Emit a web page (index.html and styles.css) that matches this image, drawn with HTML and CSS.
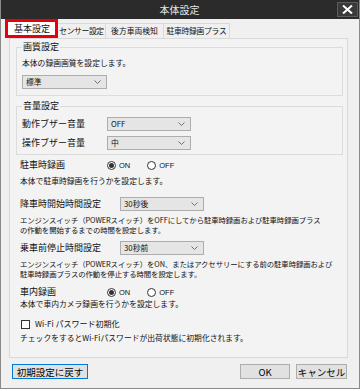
FILE: index.html
```html
<!DOCTYPE html>
<html><head><meta charset="utf-8">
<title>本体設定</title>
<link rel="stylesheet" href="styles.css">
</head><body>
<div class="window">
  <div class="titlebar">
    <span></span>
    <span class="title">本体設定</span>
    <button class="close"><svg width="11" height="9" viewBox="0 0 11 9"><path d="M1 0.5 L10 8.5 M10 0.5 L1 8.5" stroke="#fff" stroke-width="2"/></svg></button>
  </div>

  <div class="tabs">
    <div class="tab active">基本設定</div>
    <div class="tab tab-sensor">センサー設定</div>
    <div class="tab tab-rear">後方車両検知</div>
    <div class="tab tab-plus">駐車時録画プラス</div>
  </div>

  <div class="panel">
    <fieldset class="group group-quality">
      <legend>画質設定</legend>
      <p class="desc">本体の録画画質を設定します。</p>
      <div class="select">標準<svg class="arrow" width="7" height="4" viewBox="0 0 7 4"><polyline points="0.5,0.5 3.5,3.5 6.5,0.5" fill="none" stroke="#707070"/></svg></div>
    </fieldset>

    <fieldset class="group group-volume">
      <legend>音量設定</legend>
      <div class="row">
        <span class="label label-vol">動作ブザー音量</span>
        <div class="select">OFF<svg class="arrow" width="7" height="4" viewBox="0 0 7 4"><polyline points="0.5,0.5 3.5,3.5 6.5,0.5" fill="none" stroke="#707070"/></svg></div>
      </div>
      <div class="row row-gap">
        <span class="label label-vol">操作ブザー音量</span>
        <div class="select">中<svg class="arrow" width="7" height="4" viewBox="0 0 7 4"><polyline points="0.5,0.5 3.5,3.5 6.5,0.5" fill="none" stroke="#707070"/></svg></div>
      </div>
    </fieldset>

    <div class="section">
      <div class="row row-radio sp-parking">
        <span class="label label-radio">駐車時録画</span>
        <span class="radio checked"></span><span class="radio-text">ON</span>
        <span class="radio"></span><span class="radio-text">OFF</span>
      </div>
      <p class="desc sp-parking-desc">本体で駐車時録画を行うかを設定します。</p>

      <div class="row sp-start">
        <span class="label label-time">降車時開始時間設定</span>
        <div class="select">30秒後<svg class="arrow" width="7" height="4" viewBox="0 0 7 4"><polyline points="0.5,0.5 3.5,3.5 6.5,0.5" fill="none" stroke="#707070"/></svg></div>
      </div>
      <p class="desc desc-long sp-start-desc">エンジンスイッチ（POWERスイッチ）をOFFにしてから駐車時録画および駐車時録画プラス<br>の作動を開始するまでの時間を設定します。</p>

      <div class="row sp-stop">
        <span class="label label-time">乗車前停止時間設定</span>
        <div class="select">30秒前<svg class="arrow" width="7" height="4" viewBox="0 0 7 4"><polyline points="0.5,0.5 3.5,3.5 6.5,0.5" fill="none" stroke="#707070"/></svg></div>
      </div>
      <p class="desc desc-long sp-stop-desc">エンジンスイッチ（POWERスイッチ）をON、またはアクセサリーにする前の駐車時録画および<br>駐車時録画プラスの作動を停止する時間を設定します。</p>

      <div class="row row-radio sp-cabin">
        <span class="label label-radio">車内録画</span>
        <span class="radio checked"></span><span class="radio-text">ON</span>
        <span class="radio"></span><span class="radio-text">OFF</span>
      </div>
      <p class="desc sp-cabin-desc">本体で車内カメラ録画を行うかを設定します。</p>

      <div class="row sp-wifi">
        <span class="checkbox"></span><span class="label">Wi-Fi パスワード初期化</span>
      </div>
      <p class="desc sp-wifi-desc">チェックをするとWi-Fiパスワードが出荷状態に初期化されます。</p>
    </div>
  </div>

  <div class="footer">
    <button class="btn btn-default">初期設定に戻す</button>
    <span class="spacer"></span>
    <button class="btn btn-ok">OK</button>
    <button class="btn btn-cancel">キャンセル</button>
  </div>
</div>
</body></html>
```

FILE: styles.css
```css
* {
  box-sizing: border-box;
}
body {
  margin: 0;
  background-color: #fff;
  font-family: "Noto Sans CJK JP", "Noto Sans", sans-serif;
  color: #111;
}
.window {
  width: 360px;
  height: 389px;
  background-color: #f0f0f0;
  border: 1px solid #8a8a8a;
  border-top: none;
  display: flex;
  flex-direction: column;
}
.titlebar {
  height: 19px;
  background-color: #2b2b2b;
  display: grid;
  grid-template-columns: 1fr auto 1fr;
  align-items: center;
  padding-right: 1px;
}
.title {
  color: #e6e6e6;
  font-size: 10px;
  line-height: 19px;
}
.close {
  justify-self: end;
  width: 21px;
  height: 15px;
  padding: 0;
  border: 1px solid #5c5c5c;
  background-color: #3a3a3a;
  display: flex;
  align-items: center;
  justify-content: center;
}

/* tabs */
.tabs {
  height: 19px;
  display: flex;
  align-items: flex-end;
  padding-left: 4px;
}
.tab {
  height: 15px;
  font-size: 7.8px;
  line-height: 14px;
  text-align: center;
  border: 1px solid #d9d9d9;
  border-bottom: none;
  border-left: none;
  background-color: #f0f0f0;
  white-space: nowrap;
}
.tab-sensor {
  width: 48px;
  letter-spacing: -0.4px;
}
.tab-rear {
  width: 58px;
}
.tab-plus {
  width: 66px;
  letter-spacing: -0.3px;
}
.tab.active {
  height: 19px;
  width: 53px;
  padding: 0 0 0 1px;
  line-height: 13px;
  font-size: 9px;
  border: 3px solid #e8000f;
  background-color: #fff;
}

/* panel */
.panel {
  height: 320px;
  margin: 0 11px 0 8px;
  padding: 0 4px 0 6px;
  background-color: #f3f3f3;
  border: 1px solid #d9d9d9;
}
.group {
  margin: 0;
  padding: 4px 5px 6px;
  border: 1px solid #dcdcdc;
  min-width: 0;
}
.group legend {
  padding: 0 1px;
  font-size: 9px;
  line-height: 12px;
}
.group-quality {
  margin-top: 2px;
}
.group-volume {
  margin-top: 4px;
  padding: 5px 5px 4px;
}
.desc {
  margin: 0;
  font-size: 7.8px;
  line-height: 12px;
  white-space: nowrap;
}
.group-quality .select {
  margin-top: 6px;
  width: 85px;
}
.row {
  display: flex;
  align-items: center;
  height: 14px;
}
.row-gap {
  margin-top: 5px;
}
.label {
  font-size: 9px;
  line-height: 12px;
  white-space: nowrap;
}
.label-vol {
  width: 85px;
}
.label-radio {
  width: 87px;
}
.label-time {
  width: 100px;
}
.select {
  width: 84px;
  height: 14px;
  padding-left: 3px;
  font-size: 7.8px;
  line-height: 12px;
  background-color: #e5e5e5;
  border: 1px solid #adadad;
  display: flex;
  align-items: center;
}
.arrow {
  margin-left: auto;
  margin-right: 5px;
}

/* plain items below the groups */
.section {
  padding-left: 4px;
}
.row-radio {
  height: 12px;
}
.radio {
  width: 9px;
  height: 9px;
  border: 1px solid #333;
  border-radius: 50%;
  background-color: #fff;
  display: flex;
  align-items: center;
  justify-content: center;
}
.radio.checked::after {
  content: "";
  width: 5px;
  height: 5px;
  border-radius: 50%;
  background-color: #333;
}
.radio-text {
  font-family: "Liberation Sans", sans-serif;
  font-size: 7.5px;
  margin: 0 17px 0 3px;
}
.checkbox {
  width: 9px;
  height: 9px;
  margin: 0 5px 0 1px;
  border: 1px solid #333;
  background-color: #fff;
}
.desc-long {
  font-size: 7.4px;
  line-height: 10px;
  letter-spacing: -0.1px;
}
.sp-parking { margin-top: 4px; }
.sp-parking-desc { margin-top: 5px; line-height: 10px; }
.sp-start { margin-top: 11px; }
.sp-start-desc { margin-top: 4px; }
.sp-stop { margin-top: 6px; }
.sp-stop-desc { margin-top: 4px; }
.sp-cabin { margin-top: 7px; }
.sp-cabin-desc { margin-top: 1px; line-height: 10px; }
.sp-wifi { margin-top: 9px; height: 12px; }
.sp-wifi .label { font-size: 8px; }
.sp-wifi-desc { margin-top: 3px; line-height: 10px; }

/* footer buttons */
.footer {
  display: flex;
  padding: 6px 12px 0 11px;
}
.spacer {
  flex: 1;
}
.btn {
  height: 15px;
  padding: 0;
  font-family: inherit;
  font-size: 9.5px;
  line-height: 12px;
  color: #000;
  background-color: #e1e1e1;
  border: 1px solid #adadad;
}
.btn-default {
  width: 76px;
  border-color: #0078d7;
}
.btn-ok {
  width: 50px;
  margin-right: 6px;
}
.btn-cancel {
  width: 51px;
}
```
